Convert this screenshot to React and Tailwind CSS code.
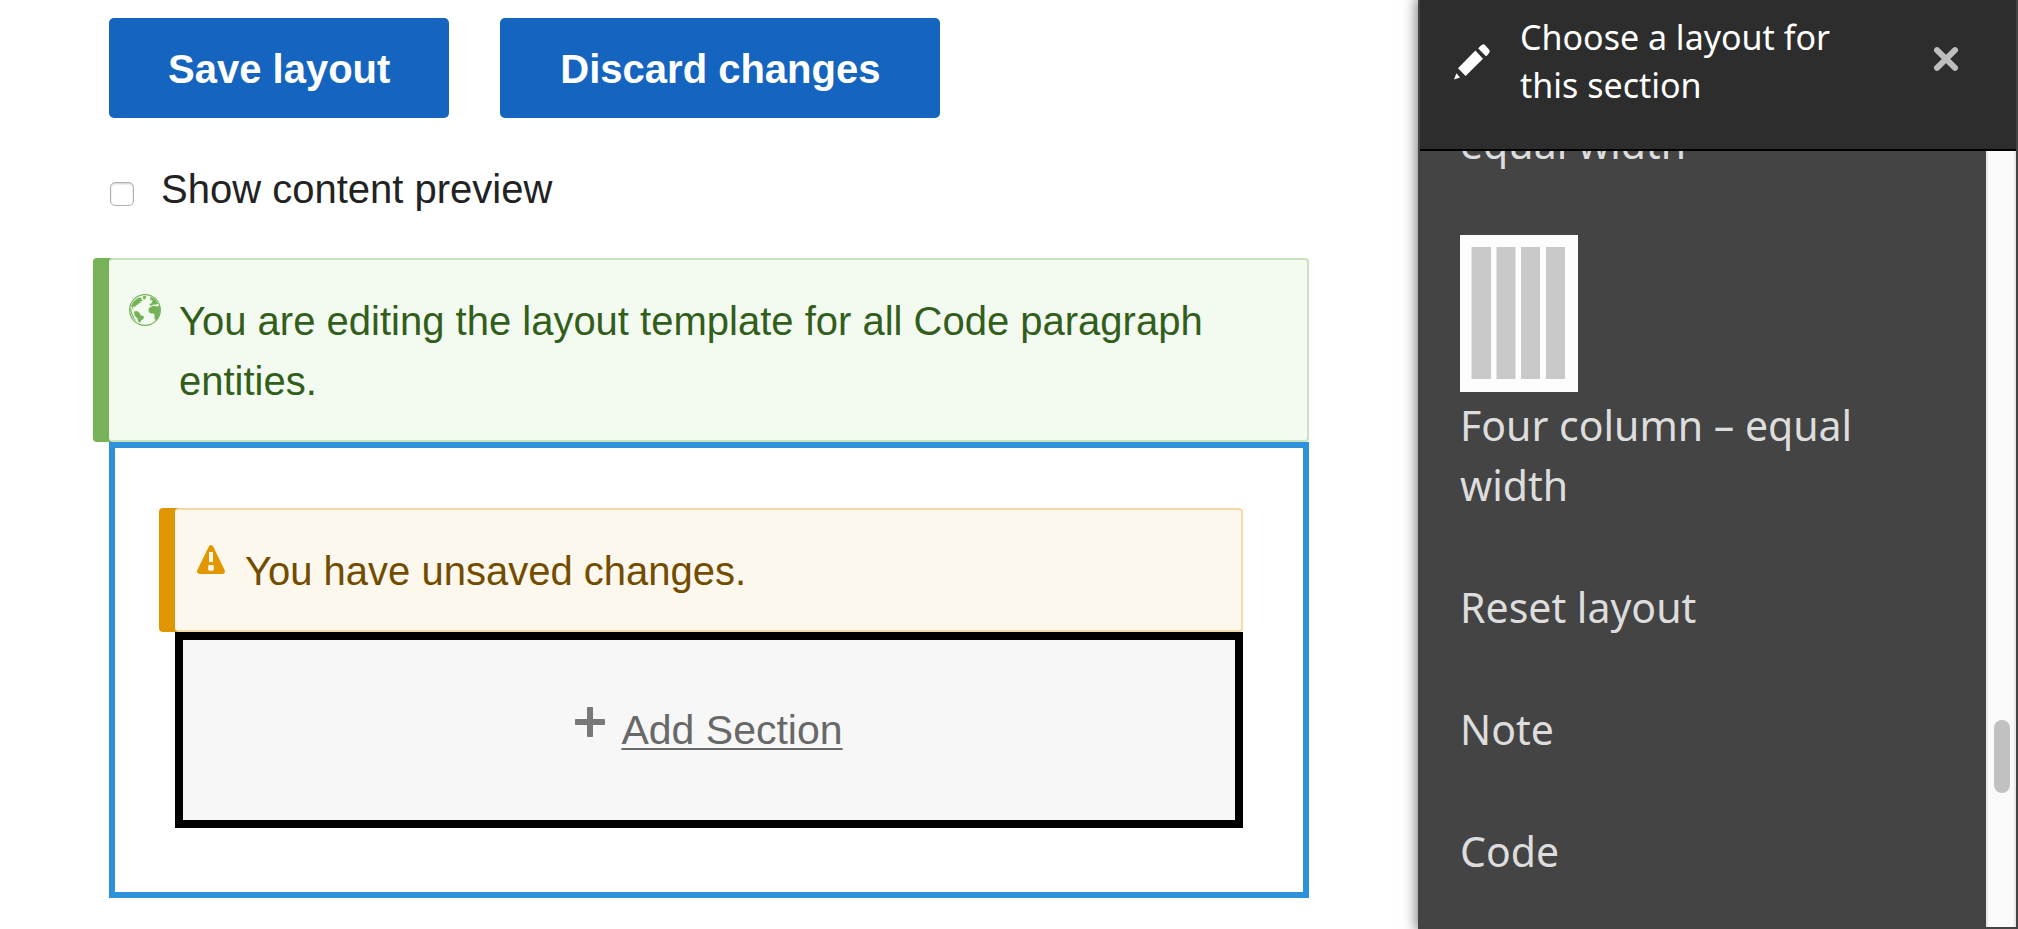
import React from 'react';

const layouts = ['Reset layout', 'Note', 'Code'];

const GlobeIcon = () => (
  <svg className="w-8 h-8 shrink-0" viewBox="0 0 32 32" fill="#73b355" aria-hidden="true">
    <circle cx="16" cy="16" r="15.4" fill="none" stroke="#73b355" strokeWidth="1.1" />
    <path d="M1.5 14 L3.2 9.5 L5.5 6.5 L9 4 L11 3.4 L13 4 L12 5.2 L13.6 6 L12.5 7.5 L11 7.6 L11.6 9 L9.5 9.6 L8.4 11 L7 11.4 L6 13 L4.6 12.2 L3.8 13.2 L4.6 15.2 L3.6 15 L2.6 12.6 Z" />
    <path d="M13.6 2.2 L17.2 2 L16.8 4 L15.4 5.8 L14.2 4.4 Z" />
    <path d="M5 17.4 L8 17 L10.6 19 L11.4 21 L15 22.6 L14.4 25 L12.2 26.4 L11 28.8 L9.4 28 L8.4 24.6 L5.6 21.4 Z" />
    <path d="M20.4 2.6 Q26.6 4.4 29.4 10.2 L27.6 10 L26.8 11 L25 10.2 L23 11.6 L20.4 11.4 L21.2 9.6 L23 9.2 L22.6 7.8 L24 7 L22.6 5.8 L21.2 6.4 L21.4 4.4 Z" />
    <path d="M21.4 13 L24.4 11.8 L28 12.6 L30.4 11.6 Q32 16 30.6 21 L28.4 25 L26.6 26.4 L25.4 24 L25.6 20.6 L24 19.4 L21 19.2 L19.4 17 L19.8 14.6 Z" />
    <path d="M1 14 L2.2 14.4 L3 19 L5 23.6 L7.6 27.4 Q1.6 23 1 14 Z" />
  </svg>
);

const WarningIcon = () => (
  <svg className="w-8 h-8 shrink-0" viewBox="0 0 32 32" aria-hidden="true">
    <path
      fill="#e29700"
      fillRule="evenodd"
      d="M16 1 Q17.4 1 18.3 2.8 L29.4 25.4 Q30.4 27.4 29.8 28.6 Q29.1 30 27.2 30 H4.8 Q2.9 30 2.2 28.6 Q1.6 27.4 2.6 25.4 L13.7 2.8 Q14.6 1 16 1 Z M14 8 V18 H18 V8 Z M14.6 21 Q13.2 21 13.2 22.4 V25.2 Q13.2 26.8 14.6 26.8 H17.6 Q18.8 26.8 18.8 25.2 V22.4 Q18.8 21 17.6 21 Z"
    />
  </svg>
);

const PencilIcon = () => (
  <svg className="w-9 h-9 shrink-0" viewBox="0 0 36 36" fill="#fff" aria-hidden="true">
    <path d="M28.2 .8 Q29.6 -.4 31 1 L35 5.4 Q36.2 7 35.4 8.4 Q34 10.8 32 12.2 L24.2 4.4 Q26 2.2 28.2 .8 Z" />
    <path d="M21.4 6.6 L29 14.8 L11.6 32 L4 24.2 Z" />
    <path d="M2.4 29.2 L6 33.4 L0 35.6 Z" />
  </svg>
);

// the coloured bar on the left is a shadow, so it hangs outside the box
const Message = ({ icon, className, children }) => (
  <div className={`flex gap-[18px] pt-[31px] pb-[29px] pl-5 pr-[30px] rounded-[4px] border-2 border-l-0 ${className}`}>
    <span className="pt-[3px] h-9">{icon}</span>
    <p>{children}</p>
  </div>
);

const Main = () => (
  <main className="flex-1 min-w-0 px-[109px] pt-[18px] text-[40px] leading-[60px] text-[#222]">
    <div className="flex gap-[51px]">
      <button type="button" className="h-[100px] px-[59px] pt-0.5 rounded-[5px] bg-[#1565c0] text-white font-bold whitespace-nowrap">
        Save layout
      </button>
      <button type="button" className="h-[100px] px-[60px] pt-0.5 rounded-[5px] bg-[#1565c0] text-white font-bold whitespace-nowrap">
        Discard changes
      </button>
    </div>

    <div className="flex items-center gap-[27px] mt-[41px] mb-[39px] pl-px">
      <input
        id="preview"
        type="checkbox"
        className="appearance-none w-6 h-6 mt-2.5 rounded-[5px] border border-[#b0b0b0] bg-white shadow-[inset_0_1px_2px_#ccc]"
      />
      <label htmlFor="preview">Show content preview</label>
    </div>

    <Message icon={<GlobeIcon />} className="bg-[#f3faef] border-[#c9e1bd] text-[#325e1c] shadow-[-16px_0_0_0_#77b259]">
      You are editing the layout template for all Code paragraph entities.
    </Message>

    <section className="border-6 border-[#2f91da] pt-[60px] pb-16 px-[60px]">
      <Message icon={<WarningIcon />} className="bg-[#fdf8ed] border-[#f4daa6] text-[#734c00] shadow-[-16px_0_0_0_#e09600]">
        You have unsaved changes.
      </Message>
      <div className="flex items-center justify-center h-[196px] border-8 border-black bg-[#f7f7f7]">
        <a href="#add-section" className="flex items-center gap-4 text-[41px] text-[#686868]">
          <svg className="w-[30px] h-[30px] mb-4" viewBox="0 0 30 30" fill="#787878" aria-hidden="true">
            <path d="M12.8 0 H17.2 Q18 0 18 .8 V12 H29.2 Q30 12 30 12.8 V17.2 Q30 18 29.2 18 H18 V29.2 Q18 30 17.2 30 H12.8 Q12 30 12 29.2 V18 H.8 Q0 18 0 17.2 V12.8 Q0 12 .8 12 H12 V.8 Q12 0 12.8 0 Z" />
          </svg>
          <span className="underline decoration-2 underline-offset-4">Add Section</span>
        </a>
      </div>
    </section>
  </main>
);

const FourColumnThumb = () => (
  <svg className="block w-[118px] h-[157px] mb-[3px]" viewBox="0 0 118 157" aria-hidden="true">
    <rect width="118" height="157" fill="#fdfdfd" />
    <g fill="#c9c9c9">
      <rect x="11.5" y="12" width="19.5" height="132" />
      <rect x="36.5" y="12" width="19" height="132" />
      <rect x="61" y="12" width="19" height="132" />
      <rect x="86" y="12" width="19" height="132" />
    </g>
  </svg>
);

const Sidebar = () => (
  <aside className="flex flex-col w-[600px] h-screen shrink-0 border-x-2 border-b-2 border-[#444] bg-[#444] shadow-[0_0_12px_2px_rgba(0,0,0,0.5)] font-['Noto_Sans',sans-serif]">
    <header className="flex items-start h-[151px] shrink-0 pl-[34px] pr-[57px] border-b-2 border-black bg-[#2d2d2d] text-white">
      <div className="pt-11">
        <PencilIcon />
      </div>
      <h2 className="flex-1 ml-[30px] mr-[60px] pt-[13px] text-[34px] leading-[48px]">Choose a layout for this section</h2>
      <button type="button" aria-label="Close" className="mt-[47px]">
        <svg className="w-[26px] h-6" viewBox="0 0 26 24" stroke="#bebebe" strokeWidth="6" strokeLinecap="round" aria-hidden="true">
          <path d="M4 3.2 L22 20.8 M22 3.2 L4 20.8" />
        </svg>
      </button>
    </header>

    <div className="flex flex-1 min-h-0">
      <ul className="flex-1 flex flex-col gap-[62px] px-10 overflow-hidden text-[41px] leading-[60px] text-[#ddd]">
        <li className="-mt-[38px]">
          <a href="#layout">equal width</a>
        </li>
        <li>
          <a href="#four-column" className="block">
            <FourColumnThumb />
            Four column – equal width
          </a>
        </li>
        {layouts.map(name => (
          <li key={name}>
            <a href="#layout">{name}</a>
          </li>
        ))}
      </ul>
      <div className="w-[30px] pt-[569px] px-1.5 border-x-2 border-[#e8e8e8] bg-[#fafafa]">
        <div className="w-4 h-[73px] rounded-full bg-[#c1c1c1]" />
      </div>
    </div>
  </aside>
);

const App = () => (
  <div className="flex h-screen overflow-hidden bg-white font-['Liberation_Sans',Arial,sans-serif]">
    <Main />
    <Sidebar />
  </div>
);

export default App;
